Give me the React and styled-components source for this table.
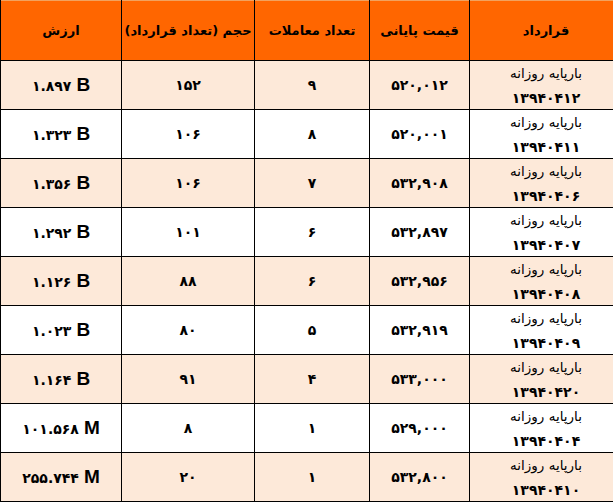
import React from "react";
import styled, { createGlobalStyle } from "styled-components";

const Global = createGlobalStyle`
  html, body {
    margin: 0;
    padding: 0;
    background: #fff;
    overflow: hidden;
  }
`;

const Table = styled.table`
  direction: rtl;
  width: 622px;
  table-layout: fixed;
  border-collapse: collapse;
  font-family: "DejaVu Sans", sans-serif;
  color: #000;
`;

const HeadCell = styled.th`
  height: 59px;
  padding: 0;
  background: #ff6600;
  border: 1px solid #000;
  border-top-color: #f2a25e;
  font-size: 13px;
  font-weight: bold;
  text-align: center;
  vertical-align: middle;
  white-space: nowrap;
`;

const Row = styled.tr`
  background: ${(p) => (p.$alt ? "#fde9d9" : "#ffffff")};
`;

const Cell = styled.td`
  height: 48px;
  padding: 0;
  border: 1px solid #000;
  text-align: center;
  vertical-align: middle;
  font-size: 14px;
  font-weight: bold;
  white-space: nowrap;
  overflow: hidden;
`;

const Contract = styled.div`
  display: flex;
  flex-direction: column;
  align-items: center;
  height: 48px;
  justify-content: space-between;
  line-height: 22px;
  padding: 1px 0 0;
  box-sizing: border-box;
`;

const ContractName = styled.span`
  font-size: 13.5px;
  font-weight: normal;
`;

const ContractCode = styled.span`
  font-size: 14px;
  font-weight: bold;
`;

const Value = styled.span`
  direction: ltr;
  unicode-bidi: isolate;
  display: inline-flex;
  align-items: baseline;
  gap: 5px;
`;

const Unit = styled.span`
  font-family: "Liberation Sans", Arial, sans-serif;
  font-size: 19px;
  font-weight: bold;
`;

const columns = [
  { title: "قرارداد", width: 153 },
  { title: "قیمت پایانی", width: 100 },
  { title: "تعداد معاملات", width: 115 },
  { title: "حجم (تعداد قرارداد)", width: 133 },
  { title: "ارزش", width: 121 },
];

const rows = [
  ["۱۳۹۴۰۴۱۲", "۵۲۰,۰۱۲", "۹", "۱۵۲", "۱.۸۹۷", "B"],
  ["۱۳۹۴۰۴۱۱", "۵۲۰,۰۰۱", "۸", "۱۰۶", "۱.۳۲۳", "B"],
  ["۱۳۹۴۰۴۰۶", "۵۳۲,۹۰۸", "۷", "۱۰۶", "۱.۳۵۶", "B"],
  ["۱۳۹۴۰۴۰۷", "۵۳۲,۸۹۷", "۶", "۱۰۱", "۱.۲۹۲", "B"],
  ["۱۳۹۴۰۴۰۸", "۵۳۲,۹۵۶", "۶", "۸۸", "۱.۱۲۶", "B"],
  ["۱۳۹۴۰۴۰۹", "۵۳۲,۹۱۹", "۵", "۸۰", "۱.۰۲۳", "B"],
  ["۱۳۹۴۰۴۲۰", "۵۳۳,۰۰۰", "۴", "۹۱", "۱.۱۶۴", "B"],
  ["۱۳۹۴۰۴۰۴", "۵۲۹,۰۰۰", "۱", "۸", "۱۰۱.۵۶۸", "M"],
  ["۱۳۹۴۰۴۱۰", "۵۳۲,۸۰۰", "۱", "۲۰", "۲۵۵.۷۴۴", "M"],
];

export default function App() {
  return (
    <>
      <Global />
      <Table>
        <colgroup>
          {columns.map((c) => (
            <col key={c.title} style={{ width: c.width }} />
          ))}
        </colgroup>
        <thead>
          <tr>
            {columns.map((c) => (
              <HeadCell key={c.title}>{c.title}</HeadCell>
            ))}
          </tr>
        </thead>
        <tbody>
          {rows.map((r, i) => (
            <Row key={r[0]} $alt={i % 2 === 0}>
              <Cell>
                <Contract>
                  <ContractName>بارپایه روزانه</ContractName>
                  <ContractCode>{r[0]}</ContractCode>
                </Contract>
              </Cell>
              <Cell>{r[1]}</Cell>
              <Cell>{r[2]}</Cell>
              <Cell>{r[3]}</Cell>
              <Cell>
                <Value>
                  <span>{r[4]}</span>
                  <Unit>{r[5]}</Unit>
                </Value>
              </Cell>
            </Row>
          ))}
        </tbody>
      </Table>
    </>
  );
}
